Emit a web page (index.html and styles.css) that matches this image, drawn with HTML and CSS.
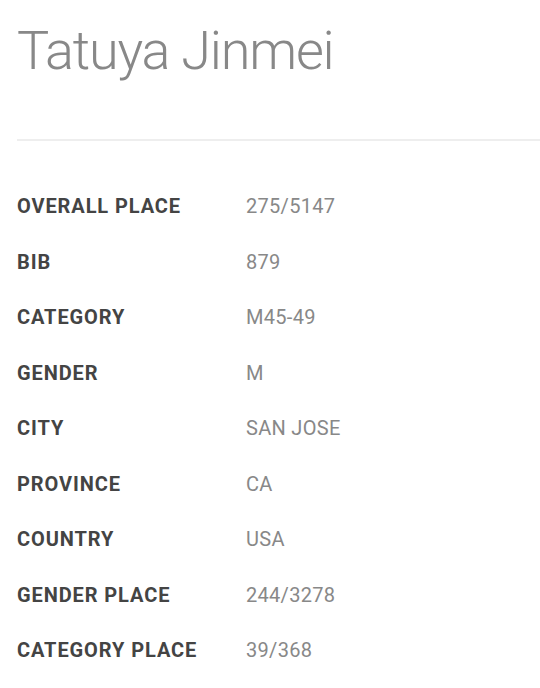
FILE: index.html
```html
<!DOCTYPE html>
<html>
<head>
<meta charset="utf-8">
<link rel="stylesheet" href="styles.css">
</head>
<body>
<div class="page">
  <h1 class="name">Tatuya Jinmei</h1>
  <hr class="rule">
  <dl class="details">
    <div class="row"><dt>OVERALL PLACE</dt><dd>275/5147</dd></div>
    <div class="row"><dt>BIB</dt><dd>879</dd></div>
    <div class="row"><dt>CATEGORY</dt><dd>M45-49</dd></div>
    <div class="row"><dt>GENDER</dt><dd>M</dd></div>
    <div class="row"><dt>CITY</dt><dd>SAN JOSE</dd></div>
    <div class="row"><dt>PROVINCE</dt><dd>CA</dd></div>
    <div class="row"><dt>COUNTRY</dt><dd>USA</dd></div>
    <div class="row"><dt>GENDER PLACE</dt><dd>244/3278</dd></div>
    <div class="row"><dt>CATEGORY PLACE</dt><dd>39/368</dd></div>
  </dl>
</div>
</body>
</html>
```
FILE: styles.css
```css
html, body {
  margin: 0;
  padding: 0;
  background: #fff;
}
.page {
  padding-left: 17px;
  font-family: Roboto, "Noto Sans", sans-serif;
}
.name {
  margin: 0;
  padding-top: 19px;
  height: 75px;
  font-size: 54px;
  font-weight: 300;
  color: #888;
  line-height: 64px;
  letter-spacing: -1.2px;
}
.rule {
  margin: 45px 0 0 0;
  border: 0;
  border-top: 2px solid #eee;
  height: 0;
}
.details {
  margin: 0;
  padding-top: 53px;
}
.row {
  display: flex;
  height: 55.5px;
  align-items: flex-start;
}
.row dt {
  width: 229px;
  font-size: 20px;
  font-weight: 700;
  color: #444;
  line-height: 24px;
  letter-spacing: 0.9px;
}
.row dd {
  margin: 0;
  font-size: 20px;
  font-weight: 400;
  color: #888;
  line-height: 24px;
  letter-spacing: 0.3px;
}
```
